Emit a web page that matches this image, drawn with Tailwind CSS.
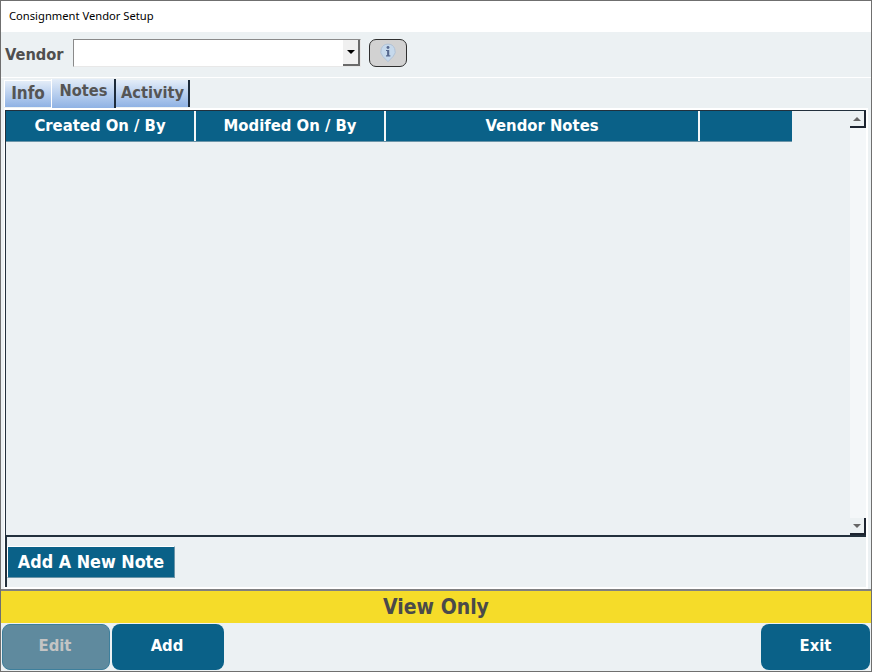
<!DOCTYPE html>
<html lang="en">
<head>
    <meta charset="UTF-8">
    <title>Consignment Vendor Setup</title>
    <script src="https://cdn.jsdelivr.net/npm/@tailwindcss/browser@4"></script>
</head>
<body class="bg-white">
    <div class="w-[872px] h-[672px] flex flex-col border border-[#6f6f6f] bg-[#ecf1f3] overflow-hidden font-['DejaVu_Sans',sans-serif] font-stretch-condensed">
        <!-- title bar -->
        <div class="h-[31px] shrink-0 bg-white flex items-center pl-[8px] pb-[1px] text-[11.2px] text-black font-['Noto_Sans',sans-serif] font-stretch-normal">Consignment Vendor Setup</div>

        <!-- vendor row -->
        <div class="h-[46px] shrink-0 flex items-start pt-[7px] pl-[4px] border-b border-white">
            <span class="w-[68px] mt-[4px] text-[16.3px] font-bold text-[#4f4f4f]">Vendor</span>
            <div class="w-[288px] h-[28px] flex bg-white border border-[#8a8a8a] border-b-[#e8e8e8] border-r-[#e8e8e8]">
                <div class="flex-1"></div>
                <div class="w-[17px] h-[26px] bg-[#f0f0f0] border-r-2 border-b-2 border-[#6a6a6a] flex items-center justify-center">
                    <div class="w-0 h-0 border-x-[4px] border-x-transparent border-t-[4px] border-t-black"></div>
                </div>
            </div>
            <div class="w-[38px] h-[28px] ml-[8px] rounded-[7px] bg-[#d2d2d2] border border-[#2f2f2f] flex items-center justify-center">
                <svg width="20" height="20" viewBox="0 0 18 18">
                    <path d="M9 1a6.5 6.5 0 0 1 4.6 11.1L9 16.8 4.4 12.1A6.5 6.5 0 0 1 9 1z" fill="#c6d9ec" stroke="#aebfd3" stroke-width="0.8"/>
                    <circle cx="9" cy="4" r="1.3" fill="#56698f"/>
                    <path d="M7.2 6.2h2.9v4.8h1v1.1H7.2V11h1V7.3h-1z" fill="#56698f"/>
                </svg>
            </div>
        </div>

        <!-- tabs -->
        <div class="h-[30px] shrink-0 flex items-end pl-[3px] font-bold text-[#555]">
            <div class="w-[47px] h-[27px] mb-[1px] flex items-center justify-center text-[17px] bg-gradient-to-b from-[#e4edf8] to-[#8fb2e4] border-t border-l border-white">Info</div>
            <div class="w-[65px] h-[29px] flex items-start justify-center pl-[1px] text-[16.3px] bg-gradient-to-b from-[#e4edf8] to-[#8fb2e4] border-l border-white border-r-2 border-r-[#1d2b3a]">Notes</div>
            <div class="w-[74px] h-[27px] mb-[1px] flex items-center justify-center pl-[1px] text-[16.3px] bg-gradient-to-b from-[#e4edf8] to-[#8fb2e4] border-r-2 border-r-[#1d2b3a]">Activity</div>
        </div>

        <!-- notes panel -->
        <div class="h-[481px] shrink-0 ml-[3px] mr-[3px] flex flex-col border-t-2 border-l border-r-2 border-b-2 border-white">
            <div class="flex-1 flex border-l border-l-[#22303c] border-t border-t-[#22303c] border-b-2 border-b-[#22303c] min-h-0">
                <div class="flex-1">
                    <div class="w-[786px] h-[31px] flex bg-[#0a6188] text-white font-bold text-[16.5px] border-b border-[#6b95a8]">
                        <div class="w-[190px] flex items-center justify-center border-r-2 border-[#f2f6f8]">Created On / By</div>
                        <div class="w-[190px] flex items-center justify-center border-r-2 border-[#f2f6f8]">Modifed On / By</div>
                        <div class="w-[314px] flex items-center justify-center border-r-2 border-[#f2f6f8]">Vendor Notes</div>
                        <div class="flex-1"></div>
                    </div>
                </div>
                <div class="w-[16px] flex flex-col justify-between bg-[#f4f7f9]">
                    <div class="h-[17px] bg-[#ecf1f3] border-r-2 border-b-2 border-[#1d2430] flex items-center justify-center">
                        <div class="w-0 h-0 border-x-[4px] border-x-transparent border-b-[4px] border-b-[#666]"></div>
                    </div>
                    <div class="h-[17px] bg-[#ecf1f3] border-r-2 border-b-2 border-[#1d2430] flex items-center justify-center">
                        <div class="w-0 h-0 border-x-[4px] border-x-transparent border-t-[4px] border-t-[#666]"></div>
                    </div>
                </div>
            </div>
            <div class="h-[50px] shrink-0 pt-[9px] border-l-2 border-l-[#22303c]">
                <div class="w-[168px] h-[32px] pt-[1px] flex items-center justify-center bg-[#0a6188] text-white font-bold text-[17.8px] border-t border-l border-white border-b border-r border-b-[#6b95a8] border-r-[#6b95a8]">Add A New Note</div>
            </div>
        </div>

        <!-- status bar -->
        <div class="h-[34px] shrink-0 pt-[1px] flex items-center justify-center bg-[#f5dc29] border-t-2 border-[#808080] text-[21px] font-bold text-[#4a4a4a]">View Only</div>

        <!-- bottom buttons -->
        <div class="h-[47px] shrink-0 flex items-center px-[1px] font-bold text-[16.5px]">
            <div class="w-[108px] h-[46px] rounded-[8px] bg-[#5f8a9e] border border-[#3d7f9c] text-[#c4c4c4] flex items-center justify-center pr-[2px]">Edit</div>
            <div class="w-[112px] h-[46px] ml-[2px] rounded-[8px] bg-[#0a6188] text-white flex items-center justify-center pr-[2px]">Add</div>
            <div class="w-[109px] h-[46px] ml-auto rounded-[8px] bg-[#0a6188] text-white flex items-center justify-center">Exit</div>
        </div>
    </div>
</body>
</html>
